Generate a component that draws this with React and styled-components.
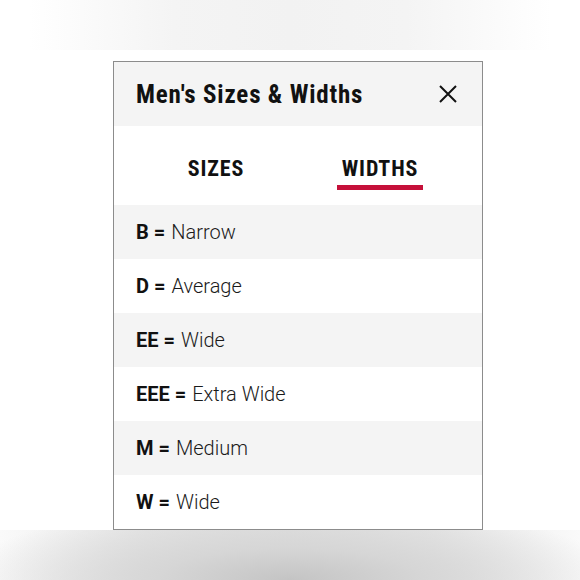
import React from "react";
import styled, { createGlobalStyle } from "styled-components";

const GlobalStyle = createGlobalStyle`
  html, body {
    margin: 0;
    padding: 0;
    background: #fff;
  }
  * {
    box-sizing: border-box;
  }
`;

const widths = [
  { code: "B", label: "Narrow" },
  { code: "D", label: "Average" },
  { code: "EE", label: "Wide" },
  { code: "EEE", label: "Extra Wide" },
  { code: "M", label: "Medium" },
  { code: "W", label: "Wide" },
];

const CloseIcon = () => (
  <svg width="20" height="20" viewBox="0 0 20 20" fill="none">
    <path d="M2 2 L18 18 M18 2 L2 18" stroke="#111" strokeWidth="2" />
  </svg>
);

const App = () => {
  return (
    <Page>
      <GlobalStyle />
      <Panel>
        <Header>
          <Title>Men's Sizes &amp; Widths</Title>
          <CloseButton aria-label="close">
            <CloseIcon />
          </CloseButton>
        </Header>
        <Tabs>
          <Tab>SIZES</Tab>
          <Tab active>WIDTHS</Tab>
        </Tabs>
        <List>
          {widths.map((item, i) => (
            <Row key={i} striped={i % 2 === 0}>
              <Code>{item.code} =</Code>
              <Label>{item.label}</Label>
            </Row>
          ))}
        </List>
      </Panel>
    </Page>
  );
};

const Page = styled.div`
  width: 580px;
  height: 580px;
  padding: 61px 0 0 113px;
  overflow: hidden;
  background:
    radial-gradient(ellipse 330px 80px at 50% 100%, #c4c4c4 0%, #d6d6d6 40%, rgba(230, 230, 230, 0) 100%) no-repeat 0 530px / 580px 50px,
    linear-gradient(90deg, #fafafa 0%, #e8e8e8 25%, #e2e2e2 50%, #e8e8e8 75%, #fafafa 100%) no-repeat 0 530px / 580px 50px,
    linear-gradient(90deg, #fff 5%, #f4f4f4 30%, #f2f2f2 50%, #f4f4f4 70%, #fff 95%) no-repeat 0 0 / 580px 50px,
    #fff;
  font-family: "Liberation Sans Narrow", "Roboto Condensed", "DejaVu Sans Condensed", sans-serif;
  color: #111;
`;

const Panel = styled.div`
  width: 370px;
  border: 1px solid #8c8c8c;
  background: #fff;
`;

const Header = styled.header`
  display: flex;
  align-items: center;
  justify-content: space-between;
  height: 64px;
  padding: 0 22px 0 22px;
  background: #f4f4f4;
`;

const Title = styled.h2`
  margin: 0;
  font-size: 25px;
  font-weight: 700;
  letter-spacing: 0.8px;
`;

const CloseButton = styled.button`
  display: flex;
  align-items: center;
  justify-content: center;
  width: 24px;
  height: 24px;
  padding: 0;
  border: 0;
  background: none;
`;

const Tabs = styled.nav`
  display: grid;
  grid-template-columns: 1fr 1fr;
  height: 79px;
  padding: 0 20px;
  background: #fff;
`;

const Tab = styled.div`
  justify-self: center;
  align-self: center;
  padding: 8px 5px 4px;
  margin-top: 6px;
  font-size: 22px;
  font-weight: 700;
  letter-spacing: 0.9px;
  border-bottom: 5px solid ${({ active }) => (active ? "#c5103a" : "transparent")};
`;

const List = styled.ul`
  margin: 0;
  padding: 0;
  list-style: none;
`;

const Row = styled.li`
  display: flex;
  align-items: center;
  gap: 6px;
  height: 54px;
  padding: 0 22px;
  background: ${({ striped }) => (striped ? "#f4f4f4" : "#fff")};
  font-family: Roboto, "Liberation Sans", sans-serif;
  font-size: 20px;
`;

const Code = styled.span`
  font-weight: 700;
`;

const Label = styled.span`
  font-weight: 300;
  color: #1a1a1a;
`;

export default App;
